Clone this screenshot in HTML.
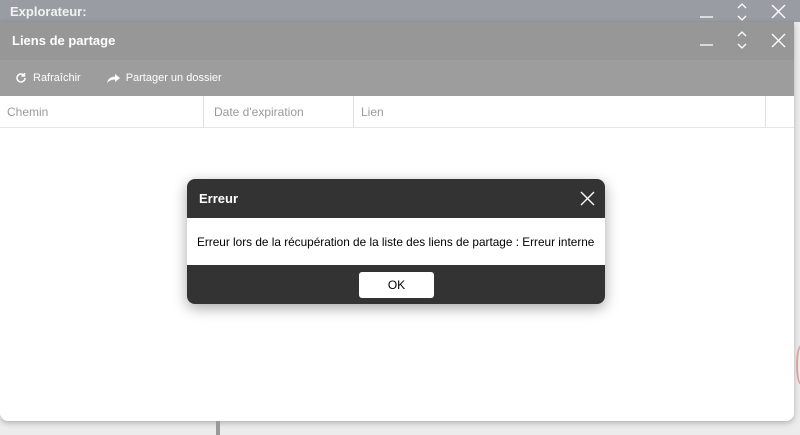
<!DOCTYPE html>
<html><head><style>
*{margin:0;padding:0;box-sizing:border-box}
body{width:800px;height:435px;overflow:hidden;background:#ececec;font-family:"Liberation Sans",sans-serif;position:relative}
.top{position:absolute;left:0;top:0;width:800px;height:22px;background:#9a9ca4;color:#f2f2f2;font-weight:bold;font-size:13px;padding:4px 10px}
.win{position:absolute;left:0;top:22px;width:794px;height:399px;background:#fff;border-radius:0 0 8px 8px;box-shadow:0 2px 6px rgba(0,0,0,.25);overflow:hidden}
.t2{height:38px;background:#979797;color:#fff;font-size:13px;font-weight:bold;padding:11px 12px}
.tb{height:36px;background:#9d9d9d;color:#fff;font-size:11px;display:flex;align-items:center;padding-left:15px}
.tb span{display:flex;align-items:center;margin-right:26px}
.hd{height:32px;border-bottom:1px solid #e6e6e6;display:flex;color:#9a9a9a;font-size:12px}
.hd div{border-right:1px solid #e0e0e0;padding:9px 7px}
.dlg{position:absolute;left:187px;top:179px;width:418px;height:125px;background:#333;border-radius:8px;box-shadow:0 4px 14px rgba(0,0,0,.35);overflow:hidden}
.dh{height:39px;color:#fff;font-weight:bold;font-size:13px;padding:12px 12px}
.db{height:47px;background:#fff;font-size:11.8px;color:#000;padding:17px 0 0 10px;white-space:nowrap}
.ok{position:absolute;left:172px;top:93px;width:75px;height:26px;background:#fff;border-radius:3px;text-align:center;font-size:12px;line-height:26px;color:#000}
svg{position:absolute}
</style></head><body>
<div class="top">Explorateur:</div>
<svg style="left:698px;top:2px" width="90" height="20" viewBox="0 0 90 20" fill="none" stroke="#fff" stroke-width="1.3">
<path d="M2 15H15"/><path d="M40 6l4-4 4 4M40 14l4 4 4-4"/><path d="M74 3l13 13M87 3L74 16"/></svg>
<div class="win">
<div class="t2">Liens de partage</div>
<div class="tb"><span><svg style="position:static;margin-right:6px" width="12" height="12" viewBox="0 0 12 12" fill="none" stroke="#fff" stroke-width="1.5"><path d="M10 6a4 4 0 1 1-1.2-2.9"/><path d="M9.5 1v3h-3" fill="#fff"/></svg>Rafraîchir</span><span><svg style="position:static;margin-right:6px" width="13" height="11" viewBox="0 0 13 11"><path d="M8 1l5 4-5 4V6.5C4 6.5 2 8 0 10 1 6 3 4 8 3.5z" fill="#fff"/></svg>Partager un dossier</span></div>
<div class="hd"><div style="width:204px">Chemin</div><div style="width:150px;padding-left:10px">Date d'expiration</div><div style="width:412px">Lien</div></div>
</div>
<svg style="left:698px;top:30px" width="90" height="20" viewBox="0 0 90 20" fill="none" stroke="#fff" stroke-width="1.3">
<path d="M2 15H15"/><path d="M40 6l4-4 4 4M40 14l4 4 4-4"/><path d="M74 4l13 13M87 4L74 17"/></svg>
<div style="position:absolute;left:216px;top:421px;width:4px;height:14px;background:#999"></div>
<div style="position:absolute;left:796px;top:345px;width:10px;height:40px;border:2px solid #e0a0a0;border-radius:50%"></div>
<div class="dlg">
<div class="dh">Erreur</div>
<svg style="left:393px;top:12px" width="15" height="15" viewBox="0 0 15 15" stroke="#fff" stroke-width="1.4"><path d="M1 1l13 13M14 1L1 14"/></svg>
<div class="db">Erreur lors de la récupération de la liste des liens de partage : Erreur interne</div>
<div class="ok">OK</div>
</div>
</body></html>
